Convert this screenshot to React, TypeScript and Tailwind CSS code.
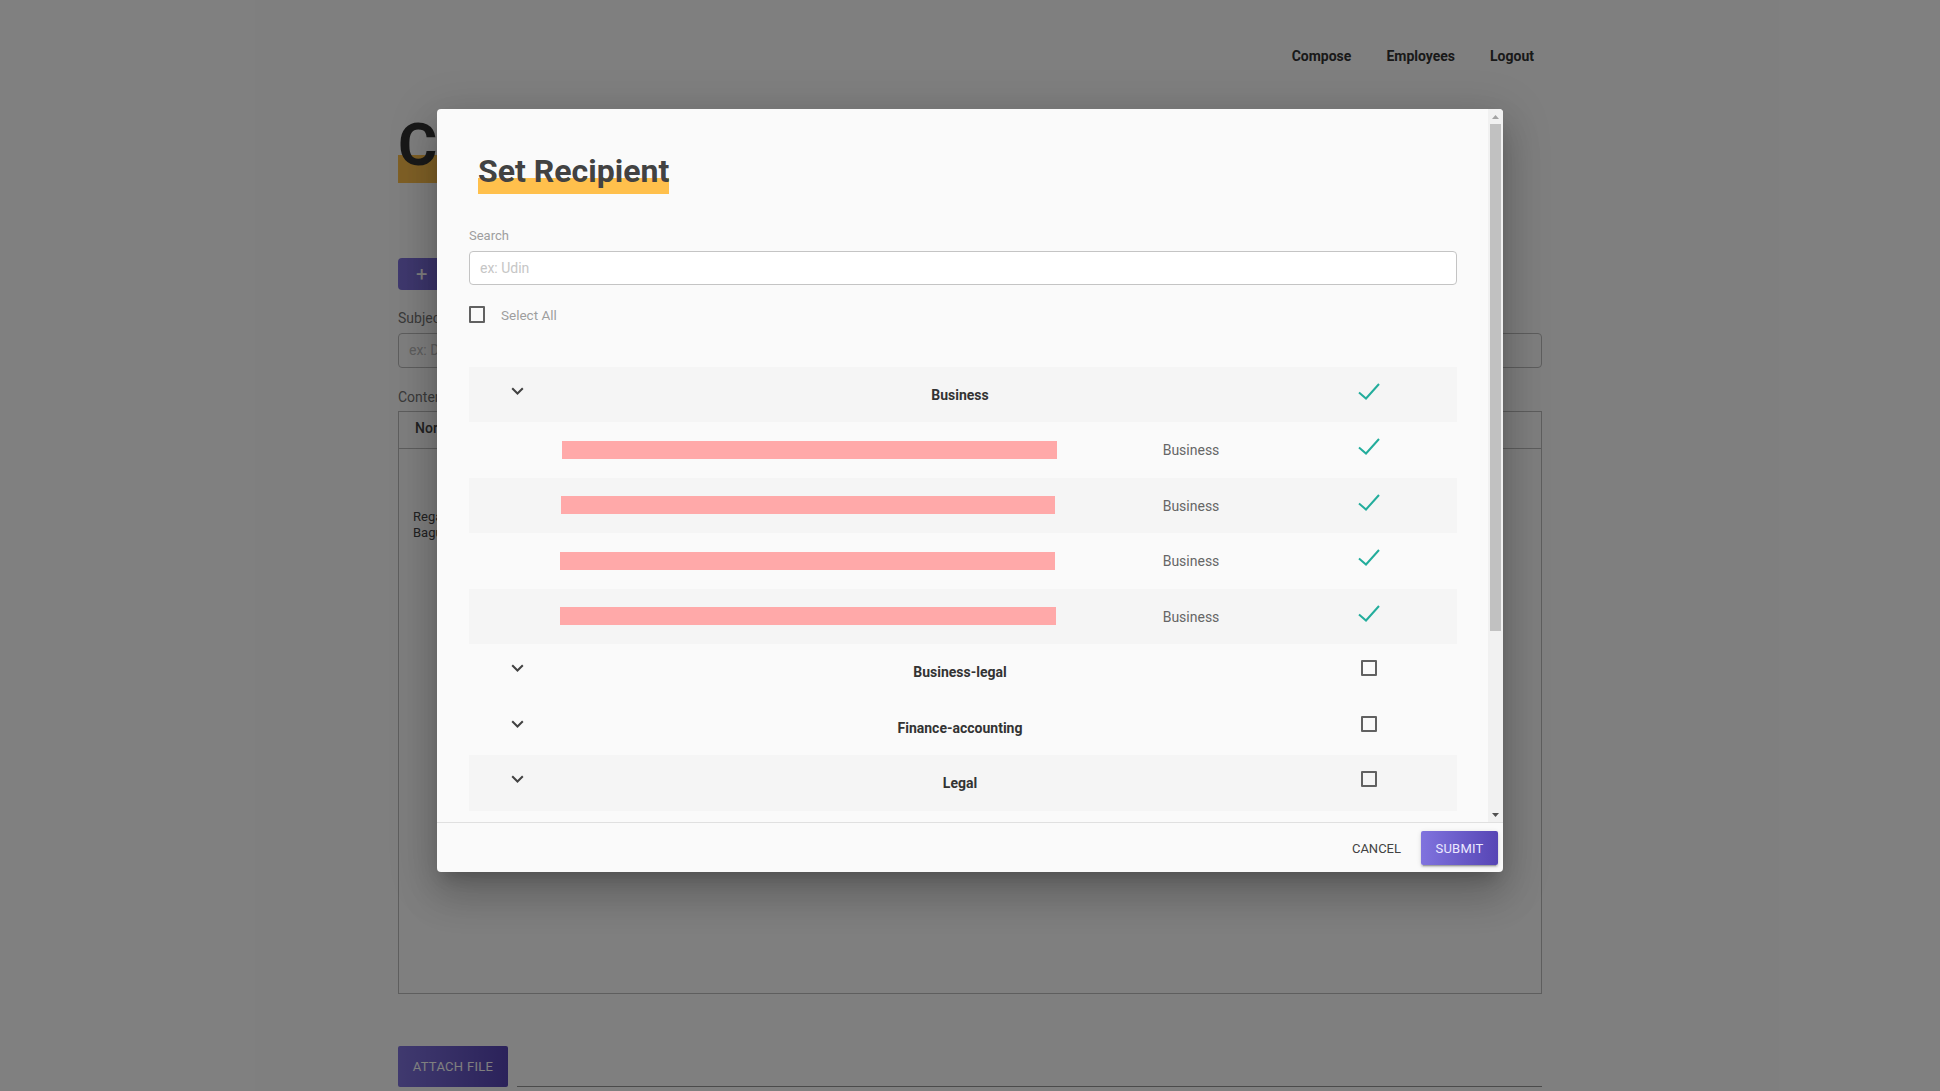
import React from 'react';

const Chevron = () => (
  <svg width="13" height="8" viewBox="0 0 13 8" fill="none" stroke="#424242" strokeWidth="2">
    <polyline points="1.2,1.2 6.5,6.5 11.8,1.2" />
  </svg>
);

const Check = () => (
  <svg width="22" height="18" viewBox="0 0 22 18" fill="none" stroke="#23ad9c" strokeWidth="2">
    <polyline points="1,10.5 8,16.5 21,2" />
  </svg>
);

const Box = () => <div className="h-4 w-4 rounded-[1px] border-2 border-[#616161]" />;

interface GroupProps {
  name: string;
  striped?: boolean;
  checked?: boolean;
}

const GroupRow = ({ name, striped, checked }: GroupProps) => (
  <div className={`flex h-[55.5px] items-center ${striped ? 'bg-[#f5f5f5]' : ''}`}>
    <div className="mb-[7px] flex w-[97px] justify-center">
      <Chevron />
    </div>
    <div className="w-[788px] pt-[2px] text-center text-[14px] font-bold text-[#333]">{name}</div>
    <div className="mb-[7px] flex-1 pl-[4px]">
      <div className="flex w-[22px] justify-center">{checked ? <Check /> : <Box />}</div>
    </div>
  </div>
);

const members = [
  { ml: 93, w: 495, striped: false },
  { ml: 92, w: 494, striped: true },
  { ml: 91, w: 495, striped: false },
  { ml: 91, w: 496, striped: true },
];

const MemberRow = ({ ml, w, striped }: { ml: number; w: number; striped: boolean }) => (
  <div className={`flex h-[55.5px] items-center ${striped ? 'bg-[#f5f5f5]' : ''}`}>
    <div className="w-[590px]">
      <div className="h-[18px] bg-[#ffa9a9]" style={{ marginLeft: ml, width: w }} />
    </div>
    <div className="w-[264px] pt-[2px] text-center text-[14px] text-[#666]">Business</div>
    <div className="mb-[7px] flex-1 pl-[35px]">
      <div className="flex w-[22px] justify-center">
        <Check />
      </div>
    </div>
  </div>
);

const Scrollbar = () => (
  <div className="flex w-[15px] flex-col bg-[#f1f1f1]">
    <div className="flex h-[15px] items-center justify-center">
      <svg width="7" height="4" viewBox="0 0 7 4">
        <polygon points="3.5,0 7,4 0,4" fill="#a3a3a3" />
      </svg>
    </div>
    <div className="flex-1 px-[2px]">
      <div className="h-[507px] bg-[#c1c1c1]" />
    </div>
    <div className="flex h-[15px] items-center justify-center">
      <svg width="7" height="4" viewBox="0 0 7 4">
        <polygon points="0,0 7,0 3.5,4" fill="#505050" />
      </svg>
    </div>
  </div>
);

const RecipientDialog = () => (
  <div className="w-[1066px] overflow-hidden rounded-[4px] bg-[#fafafa] shadow-[0px_11px_15px_-7px_rgba(0,0,0,0.2),0px_24px_38px_3px_rgba(0,0,0,0.14),0px_9px_46px_8px_rgba(0,0,0,0.12)]">
    <div className="flex h-[713px]">
      <div className="flex-1 overflow-hidden pt-[44px] pr-[31px] pl-8">
        <div className="pl-[9px]">
          <h2 className="relative inline-block pb-[4px] text-[32px] leading-[37px] font-bold text-[#424242]">
            <span className="absolute inset-x-0 bottom-0 h-4 bg-[#ffc04c]" />
            <span className="relative">Set Recipient</span>
          </h2>
        </div>

        <div className="mt-[34px] text-[13px] leading-[15px] text-[#9e9e9e]">Search</div>
        <input
          placeholder="ex: Udin"
          className="mt-[8px] block h-[34px] w-full rounded-[4px] border border-[#c4c4c4] bg-white px-[10px] text-[14px] text-[#333] outline-none placeholder:text-[#c6c6c6]"
        />

        <div className="mt-[21px] flex h-[17px] items-center">
          <div className="h-[17px] w-4 rounded-[1px] border-2 border-[#616161]" />
          <span className="ml-4 pt-[2px] text-[13.5px] text-[#9e9e9e]">Select All</span>
        </div>

        <div className="mt-[43.5px]">
          <GroupRow name="Business" striped checked />
          {members.map((m, i) => (
            <MemberRow key={i} {...m} />
          ))}
          <GroupRow name="Business-legal" />
          <GroupRow name="Finance-accounting" />
          <GroupRow name="Legal" striped />
        </div>
      </div>
      <Scrollbar />
    </div>

    <div className="flex h-[50px] items-center justify-end border-t border-[#e0e0e0] pr-[5px]">
      <button className="pt-[2px] text-[13px] text-[#424242]">CANCEL</button>
      <button className="ml-[20px] h-[34px] w-[77px] rounded-[2px] bg-linear-to-r from-[#8073de] to-[#5745b5] pt-[2px] text-[13px] tracking-[0.2px] text-[#ece9ff] shadow-[0_3px_1px_-2px_rgba(0,0,0,0.2),0_2px_2px_0_rgba(0,0,0,0.14),0_1px_5px_0_rgba(0,0,0,0.12)]">
        SUBMIT
      </button>
    </div>
  </div>
);

const ComposePage = () => (
  <div className="mx-auto w-[1144px]">
    <nav className="mt-[36px] flex h-[40px] items-center justify-end gap-[35px] pr-[8px] text-[14px] font-bold text-[#333]">
      <a>Compose</a>
      <a>Employees</a>
      <a>Logout</a>
    </nav>

    <div className="mt-[34px]">
      <h1 className="relative inline-block pb-[3px] text-[60px] leading-[70px] font-bold text-[#333]">
        <span className="absolute inset-x-0 bottom-0 h-[28px] bg-[#ffc04c]" />
        <span className="relative">Compose</span>
      </h1>
    </div>

    <div className="mt-[75px]">
      <button className="inline-flex h-[32px] items-center rounded-[4px] bg-linear-to-r from-[#8073de] to-[#5745b5] pr-4 pl-[18px] text-[14px] text-white">
        <span className="text-[20px] leading-none">+</span>
        <span className="ml-3">SET RECIPIENT</span>
      </button>
    </div>

    <div className="mt-[20px] text-[14px] leading-[16px] text-[#757575]">Subject</div>
    <div className="mt-[7px] flex h-[35px] items-center rounded-[4px] border border-[#bdbdbd] px-[10px] text-[14px] text-[#bdbdbd]">
      ex: Document title
    </div>

    <div className="mt-[21px] text-[14px] leading-[16px] text-[#757575]">Content</div>
    <div className="mt-[6px] h-[583px] border border-[#bdbdbd]">
      <div className="flex h-[37px] items-center border-b border-[#bdbdbd] pb-[3px] pl-4 text-[14px] font-medium text-[#444]">
        Normal
      </div>
      <div className="pt-[60px] pl-[14px] text-[13px] leading-[16px] text-[#444]">
        <p>Regards,</p>
        <p>Bagus</p>
      </div>
    </div>

    <div className="mt-[52px] flex items-end">
      <button className="h-[41px] w-[110px] rounded-[2px] bg-linear-to-r from-[#8073de] to-[#5745b5] text-[13px] tracking-[0.3px] text-white">
        ATTACH FILE
      </button>
      <div className="ml-[9px] h-px flex-1 bg-[#949494]" />
    </div>
  </div>
);

export default function App() {
  return (
    <div className="relative h-[1091px] overflow-hidden bg-white font-['Roboto',sans-serif]">
      <ComposePage />
      <div className="absolute inset-0 flex items-start justify-center bg-black/50 pt-[109px]">
        <RecipientDialog />
      </div>
    </div>
  );
}
